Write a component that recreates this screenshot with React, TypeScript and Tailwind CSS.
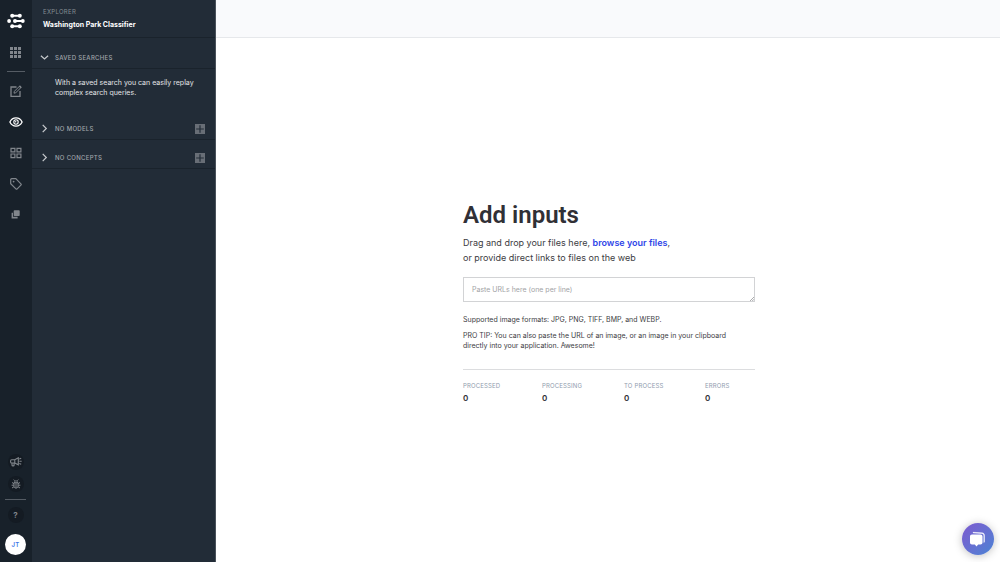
import React from "react";

type IconProps = { children: React.ReactNode; className?: string; viewBox?: string };

function Icon({ children, className = "size-3", viewBox = "0 0 12 12" }: IconProps) {
  return (
    <svg viewBox={viewBox} className={className} fill="none" stroke="currentColor" strokeWidth="1" aria-hidden="true">
      {children}
    </svg>
  );
}

function Logo() {
  return (
    <Icon className="h-4 w-[18px] text-white" viewBox="0 0 18 16">
      <g fill="currentColor" stroke="none">
        <circle cx="5.2" cy="2.8" r="2" />
        <circle cx="12.8" cy="2.8" r="2" />
        <circle cx="2.1" cy="8" r="1.9" />
        <circle cx="8" cy="8" r="2" />
        <circle cx="15.8" cy="8" r="1.9" />
        <circle cx="5.2" cy="13.2" r="2" />
        <circle cx="12.8" cy="13.2" r="2" />
      </g>
      <path d="M5 2.8h7.8M8 8h8M5 13.2h7.8" strokeWidth="2" />
    </Icon>
  );
}

const cells = [0, 4, 8];

function GridIcon() {
  return (
    <Icon className="size-[11px]" viewBox="0 0 11 11">
      <g fill="currentColor" stroke="none">
        {cells.map((y) => cells.map((x) => <rect key={`${x}-${y}`} x={x} y={y} width="3" height="3" />))}
      </g>
    </Icon>
  );
}

function EditIcon() {
  return (
    <Icon>
      <path d="M6.5 2H1v9.3h9V6" strokeWidth="1.3" />
      <path d="M4 8.2l.4-1.9L9.6 1.1l1.4 1.4-5.2 5.2z" />
      <path d="M9.4.9l1.8 1.8" strokeWidth="1.6" />
    </Icon>
  );
}

function EyeIcon() {
  return (
    <Icon className="h-3 w-[14px] text-white" viewBox="0 0 14 12">
      <path d="M.9 6C2.2 3.3 4.3 1.9 7 1.9S11.8 3.3 13.1 6C11.8 8.7 9.7 10.1 7 10.1S2.2 8.7.9 6z" strokeWidth="1.3" />
      <circle cx="7" cy="6" r="2.2" strokeWidth="1.1" />
      <circle cx="6.7" cy="5.7" r=".7" fill="currentColor" stroke="none" />
    </Icon>
  );
}

function SquaresIcon() {
  return (
    <Icon>
      <path d="M1 1.3h3.9v3.5H1zM7 1.3h3.9v3.5H7zM1 7h3.9v3.7H1zM7 7h3.9v3.7H7z" strokeWidth="1.2" />
    </Icon>
  );
}

function TagIcon() {
  return (
    <Icon>
      <path d="M.7 1.7c0-.6.4-1 1-1h4.1l5.1 5.1c.4.4.4.9 0 1.3l-3.7 3.8c-.4.4-.9.4-1.3 0L.7 5.8z" strokeWidth="1.2" />
      <circle cx="3.6" cy="3.6" r=".9" fill="currentColor" stroke="none" />
    </Icon>
  );
}

function CopyIcon() {
  return (
    <Icon className="size-[9px]" viewBox="0 0 9 9">
      <rect x="2.7" y="0.2" width="6" height="5.8" rx=".8" fill="currentColor" stroke="none" />
      <path d="M2 2.7H.6v5.7h6V6.8H2z" fill="currentColor" stroke="none" />
    </Icon>
  );
}

function MegaphoneIcon() {
  return (
    <Icon className="h-[10px] w-3" viewBox="0 0 12 10">
      <path d="M8.3.8v7L4.8 6H1.6C.9 6 .6 5.5.6 4.7V4c0-.8.4-1.2 1-1.2h3.2zM4.8 2.8V6M2 6v2.2c0 1 2.1 1 2.1 0V6M9.4 4.3h2.3M9.3 2.1l1.9-.8M9.3 6.5l1.9.8" strokeWidth="1.1" />
    </Icon>
  );
}

function BugIcon() {
  return (
    <Icon className="size-[10px]" viewBox="0 0 10 10">
      <path d="M3 3.7h4v3.4c0 1.3-.8 2-2 2s-2-.7-2-2zM3.4 3.5c0-2.2 3.2-2.2 3.2 0M5 4v5M3.6 1.7L2.7.6M6.4 1.7L7.3.6M3 4.7L1 3.5M7 4.7l2-1.2M.6 6.2H3M7 6.2h2.4M3 7.7L1 9M7 7.7L9 9" />
    </Icon>
  );
}

const railLinks = [
  { label: "Input manager", icon: <EditIcon /> },
  { label: "Explorer", icon: <EyeIcon /> },
  { label: "Models", icon: <SquaresIcon /> },
  { label: "Labels", icon: <TagIcon /> },
  { label: "Workflows", icon: <CopyIcon /> },
];

function Rail() {
  return (
    <nav className="flex w-8 shrink-0 flex-col items-center bg-[#18212a] pr-px text-[#81868c]" aria-label="Main">
      <a href="#home" aria-label="Home" className="mt-[13px] flex h-4 items-center"><Logo /></a>
      <a href="#apps" aria-label="Applications" className="mt-[15px] flex h-4 items-center"><GridIcon /></a>
      <hr className="mt-[11px] w-[18px] border-[#555c64]" />
      <div className="mt-[3px] flex flex-col">
        {railLinks.map((l) => (
          <a key={l.label} href="#view" aria-label={l.label} className="flex h-[31px] w-6 items-center justify-center">
            {l.icon}
          </a>
        ))}
      </div>
      <div className="mt-auto flex flex-col items-center gap-[7px]">
        <div className="flex flex-col gap-[6px]">
          <button aria-label="Announcements" className="flex size-4 items-center justify-center rounded-full bg-[#141b23]"><MegaphoneIcon /></button>
          <button aria-label="Report a bug" className="flex size-4 items-center justify-center rounded-full bg-[#141b23]"><BugIcon /></button>
        </div>
        <hr className="w-[21px] border-[#555c64]" />
        <button aria-label="Help" className="flex size-4 items-center justify-center rounded-full bg-[#141b23] text-[8px] font-bold">?</button>
      </div>
      <button className="mt-[11px] mb-[7px] flex size-[21px] items-center justify-center rounded-full bg-white text-[6px] font-semibold tracking-wider text-[#3e76e8]">JT</button>
    </nav>
  );
}

function SectionRow({ title, open = false }: { title: string; open?: boolean }) {
  return (
    <div className="flex h-[29px] items-center border-b border-[#1a232c] pt-[7px] pr-[10px] pl-2">
      <button className="flex flex-1 items-center gap-[6px] text-[6px] leading-2 font-medium tracking-wider text-[#a0a5aa]" aria-expanded={open}>
        <Icon className="size-[9px] text-[#c7cacd]" viewBox="0 0 9 9">
          <path d={open ? "M.9 2.7l3.6 3.3 3.6-3.3" : "M2.7.9l3.6 3.6-3.6 3.6"} strokeWidth="1.2" />
        </Icon>
        {title}
      </button>
      {!open && (
        <button aria-label="Add" className="flex size-[10px] items-center justify-center bg-[#686e76] text-[#222c37]">
          <Icon className="size-[10px]" viewBox="0 0 10 10"><path d="M5 1.2v7.6M1.2 5h7.6" strokeWidth="1.2" /></Icon>
        </button>
      )}
    </div>
  );
}

function Sidebar() {
  return (
    <aside className="w-[184px] shrink-0 border-r border-[#4a525b] bg-[#222c37]">
      <header className="h-[38px] border-b border-[#1a232c] pt-2 pl-[11px]">
        <p className="text-[6px] leading-2 tracking-wider text-[#858c93]">EXPLORER</p>
        <h2 className="mt-[3px] text-[7px] leading-3 font-bold text-white">Washington Park Classifier</h2>
      </header>
      <div className="pt-[2px]">
        <SectionRow title="SAVED SEARCHES" open />
      </div>
      <p className="h-[42px] pt-[9px] pr-3 pl-[23px] text-[7px] leading-[10px] text-[#e3e5e7]">
        With a saved search you can easily replay complex search queries.
      </p>
      <SectionRow title="NO MODELS" />
      <SectionRow title="NO CONCEPTS" />
    </aside>
  );
}

const stats = [
  { label: "PROCESSED", value: 0 },
  { label: "PROCESSING", value: 0 },
  { label: "TO PROCESS", value: 0 },
  { label: "ERRORS", value: 0 },
];

function AddInputs() {
  return (
    <section className="w-[292px]">
      <h1 className="font-['Roboto',sans-serif] text-[24px] leading-7 font-semibold text-[#303036]">Add inputs</h1>
      <p className="mt-[6px] text-[9px] leading-[15px] text-[#3c3c42]">
        Drag and drop your files here,&nbsp;<a href="#browse" className="font-semibold text-[#2f45e8]">browse your files</a>,
        <br />
        or provide direct links to files on the web
      </p>
      <div className="relative mt-3">
        <textarea
          aria-label="URLs"
          placeholder="Paste URLs here (one per line)"
          className="block h-[25px] w-full resize-none border border-[#d2d3d5] bg-white px-2 py-[7px] text-[7px] leading-[10px] placeholder:text-[#a2a3a6]"
        />
        <Icon className="pointer-events-none absolute right-px bottom-px size-1 text-[#85868a]" viewBox="0 0 4 4">
          <path d="M0 4l4-4M2.2 4L4 2.2" strokeWidth=".7" />
        </Icon>
      </div>
      <div className="flex flex-col gap-[6px] pt-[13px] pr-5 text-[7px] leading-[10px] text-[#3c3c42]">
        <p>Supported image formats: JPG, PNG, TIFF, BMP, and WEBP.</p>
        <p>PRO TIP: You can also paste the URL of an image, or an image in your clipboard directly into your application. Awesome!</p>
      </div>
      <dl className="mt-[18px] grid grid-cols-[79px_82px_81px_1fr] border-t border-[#dcdddf] pt-3">
        {stats.map((s) => (
          <div key={s.label}>
            <dt className="text-[6px] leading-2 tracking-wide text-[#8f9cae]">{s.label}</dt>
            <dd className="mt-[3px] text-[8px] leading-[10px] font-semibold text-[#303036]">{s.value}</dd>
          </div>
        ))}
      </dl>
    </section>
  );
}

function ChatButton() {
  return (
    <button aria-label="Open chat" className="fixed right-[6px] bottom-[7px] flex size-8 items-center justify-center rounded-full bg-linear-to-br from-[#7b59cf] to-[#4683d4] shadow-[0_1px_8px_rgba(0,0,0,0.25)]">
      <Icon className="size-4 text-white" viewBox="0 0 16 16">
        <path d="M2 3.5h8.5c1.2 0 2 .8 2 2v6c0 1.2-.8 2-2 2H8.2L6.5 15.5 4.8 13.5H2c-1.2 0-2-.8-2-2v-6c0-1.2.8-2 2-2z" fill="currentColor" stroke="none" />
        <path d="M3 1.3l9 .5c1.5.1 2.500 1 2.500 2.500v6.200c0 .5-.2.9-.7 1.100V4.800c0-1.400-.8-2.200-2.200-2.300L3 1.900z" fill="currentColor" strokeWidth=".4" />
      </Icon>
    </button>
  );
}

export default function App() {
  return (
    <div className="flex min-h-screen bg-white font-['Inter',sans-serif]">
      <Rail />
      <Sidebar />
      <div className="flex flex-1 flex-col">
        <header className="h-[38px] border-b border-[#e6e8eb] bg-[#f9fafc]" />
        <main className="flex flex-1 items-center justify-center pt-1 pl-[2px]">
          <AddInputs />
        </main>
      </div>
      <ChatButton />
    </div>
  );
}
